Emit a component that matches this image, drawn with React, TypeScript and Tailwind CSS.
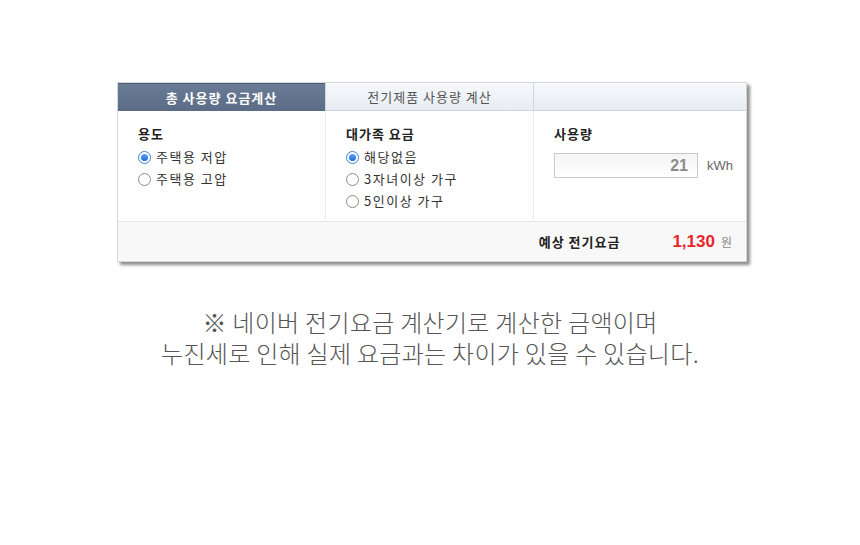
import { useState } from 'react';

/**
 * 전기요금 계산 위젯 + 안내 문구
 */

const KR = "font-['Noto_Sans_CJK_KR','Noto_Sans',sans-serif]";

function Radio({ checked, label, onClick }: { checked: boolean; label: string; onClick: () => void }) {
  return (
    <button onClick={onClick} className="flex h-[22px] items-center gap-[5px] text-[13px] tracking-[1.5px] text-[#333]">
      {checked ? (
        <span className="flex h-[13px] w-[13px] items-center justify-center rounded-full border border-[#3c7fd6] bg-white">
          <span className="h-[7px] w-[7px] rounded-full bg-gradient-to-b from-[#5aa2f5] to-[#1d6ad8]" />
        </span>
      ) : (
        <span className="h-[13px] w-[13px] rounded-full border border-[#8a8a8a] bg-white" />
      )}
      <span>{label}</span>
    </button>
  );
}

export default function App() {
  const [tab, setTab] = useState(0);
  const [use, setUse] = useState(0);
  const [family, setFamily] = useState(0);

  const tabs = ['총 사용량 요금계산', '전기제품 사용량 계산'];

  return (
    <div className={`h-[545px] w-[860px] bg-white ${KR}`}>
      <div className="pl-[117px] pt-[82px]">
        <div className="w-[630px] border border-[#d6d6d6] bg-white shadow-[3px_3px_3px_rgba(0,0,0,0.45)]">
          {/* tabs */}
          <div className="grid h-[28px] grid-cols-[207px_208px_1fr]">
            {tabs.map((t, i) =>
              tab === i ? (
                <button
                  key={t}
                  onClick={() => setTab(i)}
                  className="border-t border-[#4f5f78] bg-gradient-to-b from-[#6a7b96] to-[#5b6c87] text-[13px] font-bold tracking-[1px] text-white"
                >
                  {t}
                </button>
              ) : (
                <button
                  key={t}
                  onClick={() => setTab(i)}
                  className="border-b border-l border-[#cfd5dc] bg-gradient-to-b from-[#f6f8fb] to-[#e8edf3] text-[13px] tracking-[1px] text-[#555]"
                >
                  {t}
                </button>
              )
            )}
            <div className="border-b border-l border-[#cfd5dc] bg-gradient-to-b from-[#f6f8fb] to-[#e8edf3]" />
          </div>

          {/* body */}
          <div className="grid h-[111px] grid-cols-[207px_208px_1fr] border-b border-[#e6e6e6]">
            <div className="pl-5 pt-[13px]">
              <div className="mb-[2px] h-5 text-[13px] font-bold leading-5 tracking-[1px] text-[#222]">용도</div>
              <Radio checked={use === 0} label="주택용 저압" onClick={() => setUse(0)} />
              <Radio checked={use === 1} label="주택용 고압" onClick={() => setUse(1)} />
            </div>
            <div className="border-l border-[#ececec] pl-5 pt-[13px]">
              <div className="mb-[2px] h-5 text-[13px] font-bold leading-5 tracking-[1px] text-[#222]">대가족 요금</div>
              <Radio checked={family === 0} label="해당없음" onClick={() => setFamily(0)} />
              <Radio checked={family === 1} label="3자녀이상 가구" onClick={() => setFamily(1)} />
              <Radio checked={family === 2} label="5인이상 가구" onClick={() => setFamily(2)} />
            </div>
            <div className="border-l border-[#ececec] pl-5 pt-[13px]">
              <div className="h-5 text-[13px] font-bold leading-5 tracking-[1px] text-[#222]">사용량</div>
              <div className="mt-[9px] flex items-center gap-[9px]">
                <div className="flex h-[25px] w-[144px] items-center justify-end border border-[#c9c9c9] bg-gradient-to-b from-[#f4f4f4] to-white pr-[9px] font-['Liberation_Sans',sans-serif] text-[16px] font-bold text-[#8c8c8c]">
                  21
                </div>
                <span className="font-['Liberation_Sans',sans-serif] text-[13px] text-[#666]">kWh</span>
              </div>
            </div>
          </div>

          {/* result */}
          <div className="flex h-[39px] items-center justify-end bg-[#f8f8f8] pr-[14px]">
            <span className="text-[13px] font-bold tracking-[1px] text-[#222]">예상 전기요금</span>
            <span className="ml-[52px] font-['Liberation_Sans',sans-serif] text-[17px] font-bold text-[#e8262b]">1,130</span>
            <span className="ml-[6px] text-[12px] text-[#8a8a8a]">원</span>
          </div>
        </div>
      </div>

      {/* notice */}
      <div className="mt-[44px] text-center text-[24px] font-light leading-[31px] tracking-[0.3px] text-[#555]">
        <p>※ 네이버 전기요금 계산기로 계산한 금액이며</p>
        <p>누진세로 인해 실제 요금과는 차이가 있을 수 있습니다.</p>
      </div>
    </div>
  );
}
